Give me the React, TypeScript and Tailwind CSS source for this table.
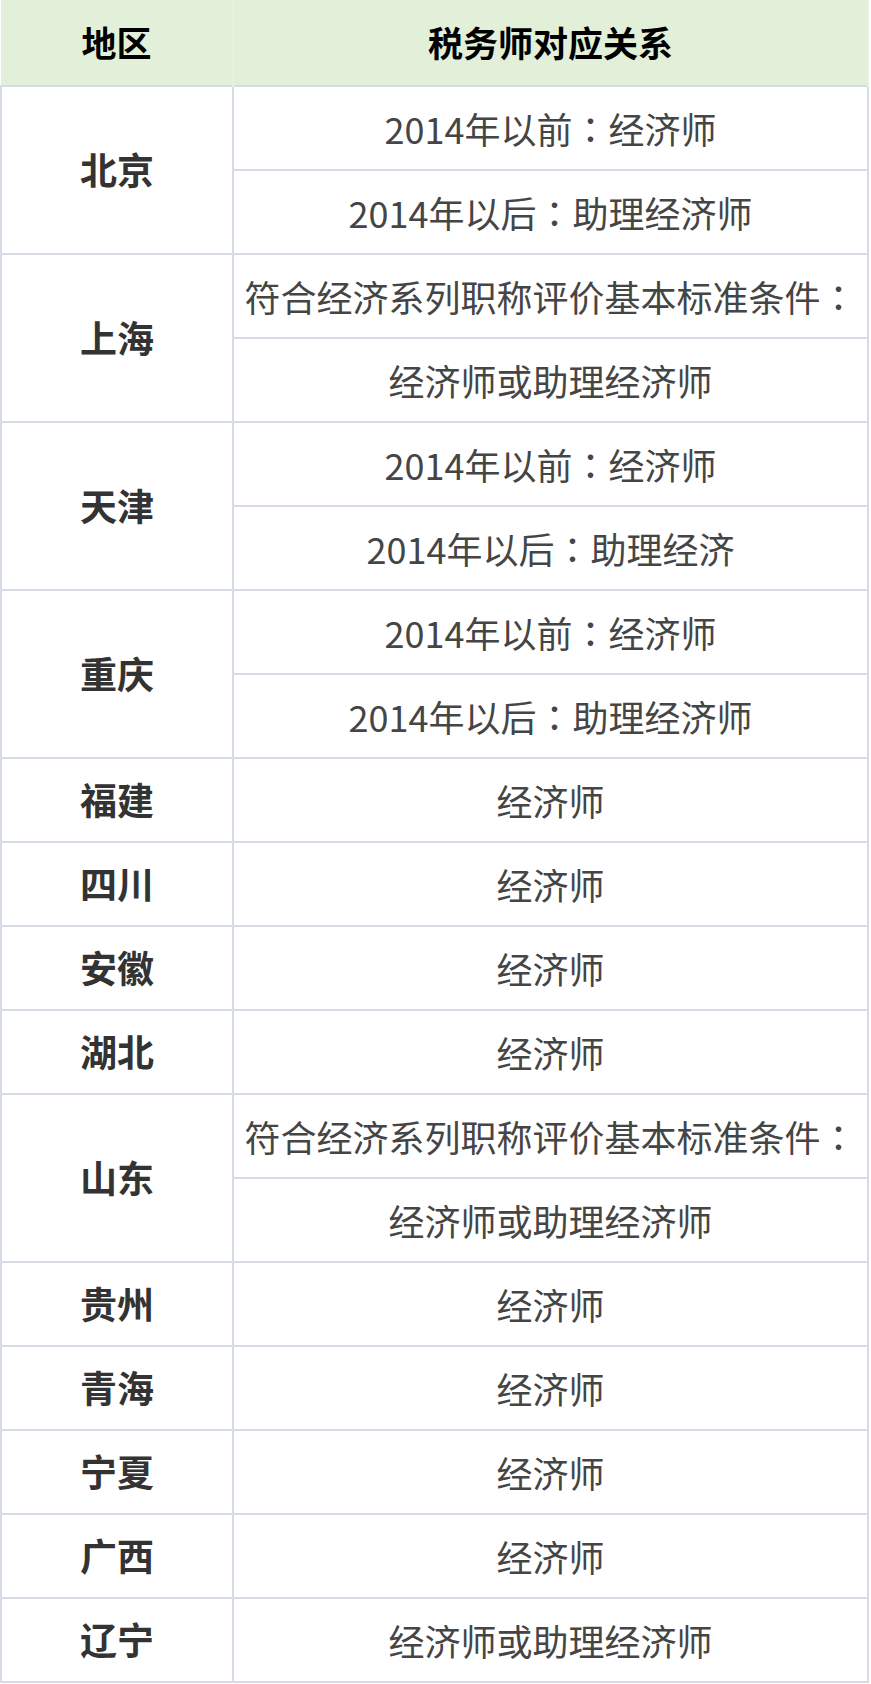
import React from 'react';

type Region = { name: string; lines: string[] };

const rows: Region[] = [
  { name: '北京', lines: ['2014年以前：经济师', '2014年以后：助理经济师'] },
  { name: '上海', lines: ['符合经济系列职称评价基本标准条件：', '经济师或助理经济师'] },
  { name: '天津', lines: ['2014年以前：经济师', '2014年以后：助理经济'] },
  { name: '重庆', lines: ['2014年以前：经济师', '2014年以后：助理经济师'] },
  { name: '福建', lines: ['经济师'] },
  { name: '四川', lines: ['经济师'] },
  { name: '安徽', lines: ['经济师'] },
  { name: '湖北', lines: ['经济师'] },
  { name: '山东', lines: ['符合经济系列职称评价基本标准条件：', '经济师或助理经济师'] },
  { name: '贵州', lines: ['经济师'] },
  { name: '青海', lines: ['经济师'] },
  { name: '宁夏', lines: ['经济师'] },
  { name: '广西', lines: ['经济师'] },
  { name: '辽宁', lines: ['经济师或助理经济师'] },
];

// full-width colon centred in its box, as in the original
function Line({ text }: { text: string }) {
  const parts = text.split('：');
  return (
    <>
      {parts.map((p, i) => (
        <React.Fragment key={i}>
          {i > 0 && <span className="font-['Noto_Sans_CJK_JP',sans-serif]">：</span>}
          {p}
        </React.Fragment>
      ))}
    </>
  );
}

export default function App() {
  return (
    <div className="w-[871px] bg-white font-['Noto_Sans_CJK_SC','Noto_Sans',sans-serif]">
      <table className="w-[869px] border-collapse table-fixed">
        <colgroup>
          <col className="w-[232px]" />
          <col />
        </colgroup>
        <thead>
          <tr className="h-[86px] bg-[#e2efd9]">
            <th className="border-r-2 border-[#e8f0e2] text-[35px] font-bold text-black">地区</th>
            <th className="border-r-2 border-[#e8f0e2] text-[35px] font-bold text-black">税务师对应关系</th>
          </tr>
        </thead>
        <tbody className="text-[36px] text-[#454545]">
          {rows.map((r) =>
            r.lines.map((line, i) => (
              <tr key={r.name + i} className="h-[84px]">
                {i === 0 && (
                  <td
                    rowSpan={r.lines.length}
                    className="border-2 border-[#d5dce6] text-center text-[37px] font-semibold text-[#333]"
                  >
                    {r.name}
                  </td>
                )}
                <td className="border-2 border-[#d5dce6] text-center whitespace-nowrap leading-none">
                  <Line text={line} />
                </td>
              </tr>
            ))
          )}
        </tbody>
      </table>
    </div>
  );
}
